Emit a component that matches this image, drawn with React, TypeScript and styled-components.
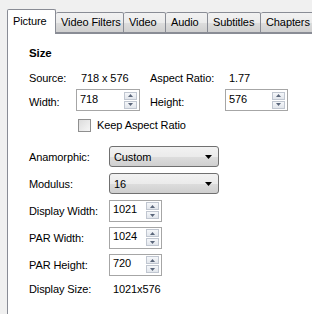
import styled, { createGlobalStyle } from "styled-components";

const Global = createGlobalStyle`
  html, body {
    margin: 0;
    padding: 0;
    background: #f0f0f0;
  }
  body {
    font-family: "Liberation Sans", Arial, sans-serif;
    font-size: 11px;
    letter-spacing: -0.1px;
    color: #000000;
  }
`;

const Window = styled.div`
  width: 312px;
  height: 314px;
  display: flex;
  flex-direction: column;
  overflow: hidden;
  background: #f0f0f0;
`;

const TabBar = styled.div`
  display: flex;
  align-items: flex-end;
  height: 33px;
  padding-left: 7px;
  box-sizing: border-box;
  position: relative;
  z-index: 1;
`;

const Tab = styled.div<{ $active?: boolean; $w: number }>`
  width: ${(p) => p.$w}px;
  flex-shrink: 0;
  box-sizing: border-box;
  height: ${(p) => (p.$active ? 25 : 21)}px;
  margin-bottom: ${(p) => (p.$active ? -1 : 0)}px;
  border: 1px solid #898c95;
  border-bottom: ${(p) => (p.$active ? "none" : "1px solid #898c95")};
  border-left: ${(p) => (p.$active ? "1px solid #898c95" : "none")};
  border-radius: 2px 2px 0 0;
  background: ${(p) =>
    p.$active
      ? "#ffffff"
      : "linear-gradient(#f2f2f2 0%, #ebebeb 50%, #dddddd 51%, #cfcfcf 100%)"};
  display: flex;
  align-items: flex-start;
  justify-content: flex-start;
  padding-left: 5px;
  padding-top: ${(p) => (p.$active ? 5 : 3)}px;
  white-space: nowrap;
  font-size: 11px;
`;

const Panel = styled.div`
  flex: 1;
  margin-left: 7px;
  background: #ffffff;
  border-left: 1px solid #898c95;
  border-top: 1px solid #898c95;
  padding: 12px 0 0 21px;
  display: flex;
  flex-direction: column;
`;

const Title = styled.div`
  font-weight: bold;
  height: 14px;
  line-height: 14px;
  font-size: 11.5px;
`;

const Row = styled.div<{ $h: number; $gap: number }>`
  display: flex;
  align-items: center;
  height: ${(p) => p.$h}px;
  margin-top: ${(p) => p.$gap}px;
  white-space: nowrap;
`;

const Label = styled.span<{ $w: number; $pad?: number; $left?: number }>`
  width: ${(p) => p.$w}px;
  flex-shrink: 0;
  padding-top: ${(p) => p.$pad ?? 0}px;
  padding-left: ${(p) => p.$left ?? 0}px;
  box-sizing: border-box;
`;

const Spin = styled.div<{ $w: number }>`
  width: ${(p) => p.$w}px;
  height: 22px;
  box-sizing: border-box;
  border: 1px solid #a6a6a6;
  background: #ffffff;
  display: flex;
  align-items: center;
  justify-content: space-between;
  padding: 0 2px 0 3px;
  flex-shrink: 0;
`;

const SpinText = styled.span`
  margin-top: -3px;
`;

const SpinButtons = styled.div`
  width: 13px;
  height: 17px;
  display: flex;
  flex-direction: column;
  gap: 1px;
`;

const SpinHalf = styled.div`
  flex: 1;
  box-sizing: border-box;
  border: 1px solid #c0c6d0;
  background: linear-gradient(#f5f7fa, #e2e6ec);
  display: flex;
  align-items: center;
  justify-content: center;
`;

const Arrow = ({ up }: { up?: boolean }) => (
  <svg width="5" height="3" viewBox="0 0 5 3">
    <path d={up ? "M0 3 L2.5 0 L5 3 Z" : "M0 0 L2.5 3 L5 0 Z"} fill="#5a667a" />
  </svg>
);

const SpinBox = ({ value, w }: { value: string; w: number }) => (
  <Spin $w={w}>
    <SpinText>{value}</SpinText>
    <SpinButtons>
      <SpinHalf>
        <Arrow up />
      </SpinHalf>
      <SpinHalf>
        <Arrow />
      </SpinHalf>
    </SpinButtons>
  </Spin>
);

const Combo = styled.div`
  width: 110px;
  height: 21px;
  box-sizing: border-box;
  border: 1px solid #707070;
  border-radius: 3px;
  background: linear-gradient(#f2f2f2 0%, #ebebeb 50%, #dddddd 51%, #cfcfcf 100%);
  display: flex;
  align-items: center;
  justify-content: space-between;
  padding: 0 6px 0 4px;
`;

const ComboBox = ({ value }: { value: string }) => (
  <Combo>
    <span>{value}</span>
    <svg width="7" height="4" viewBox="0 0 7 4">
      <path d="M0 0 L7 0 L3.5 4 Z" fill="#000000" />
    </svg>
  </Combo>
);

const Check = styled.div`
  width: 13px;
  height: 13px;
  box-sizing: border-box;
  border: 1px solid #8f8f8f;
  background: linear-gradient(135deg, #dcdcdc, #f6f6f6);
  margin: 0 6px 0 49px;
  flex-shrink: 0;
`;

const Value = styled.span<{ $w?: number; $pad?: number }>`
  width: ${(p) => (p.$w ? `${p.$w}px` : "auto")};
  padding-left: ${(p) => p.$pad ?? 0}px;
  flex-shrink: 0;
`;

const tabs = [
  { name: "Picture", w: 49 },
  { name: "Video Filters", w: 68 },
  { name: "Video", w: 42 },
  { name: "Audio", w: 42 },
  { name: "Subtitles", w: 53 },
  { name: "Chapters", w: 58 },
];

const App = () => {
  return (
    <Window>
      <Global />
      <TabBar>
        {tabs.map((t, i) => (
          <Tab key={t.name} $active={i === 0} $w={t.w}>
            {t.name}
          </Tab>
        ))}
      </TabBar>
      <Panel>
        <Title>Size</Title>
        <Row $h={14} $gap={11}>
          <Label $w={52}>Source:</Label>
          <Value $w={69}>718 x 576</Value>
          <Label $w={79}>Aspect Ratio:</Label>
          <Value>1.77</Value>
        </Row>
        <Row $h={22} $gap={4}>
          <Label $w={47} $pad={3}>Width:</Label>
          <SpinBox value="718" w={64} />
          <Label $w={85} $pad={3} $left={10}>
            Height:
          </Label>
          <SpinBox value="576" w={63} />
        </Row>
        <Row $h={14} $gap={7}>
          <Check />
          <span>Keep Aspect Ratio</span>
        </Row>
        <Row $h={21} $gap={14}>
          <Label $w={80}>Anamorphic:</Label>
          <ComboBox value="Custom" />
        </Row>
        <Row $h={21} $gap={6}>
          <Label $w={80}>Modulus:</Label>
          <ComboBox value="16" />
        </Row>
        <Row $h={21} $gap={6}>
          <Label $w={80}>Display Width:</Label>
          <SpinBox value="1021" w={53} />
        </Row>
        <Row $h={21} $gap={6}>
          <Label $w={80}>PAR Width:</Label>
          <SpinBox value="1024" w={53} />
        </Row>
        <Row $h={21} $gap={6}>
          <Label $w={80}>PAR Height:</Label>
          <SpinBox value="720" w={53} />
        </Row>
        <Row $h={14} $gap={7}>
          <Label $w={80}>Display Size:</Label>
          <Value $pad={4}>1021x576</Value>
        </Row>
      </Panel>
    </Window>
  );
};

export default App;
